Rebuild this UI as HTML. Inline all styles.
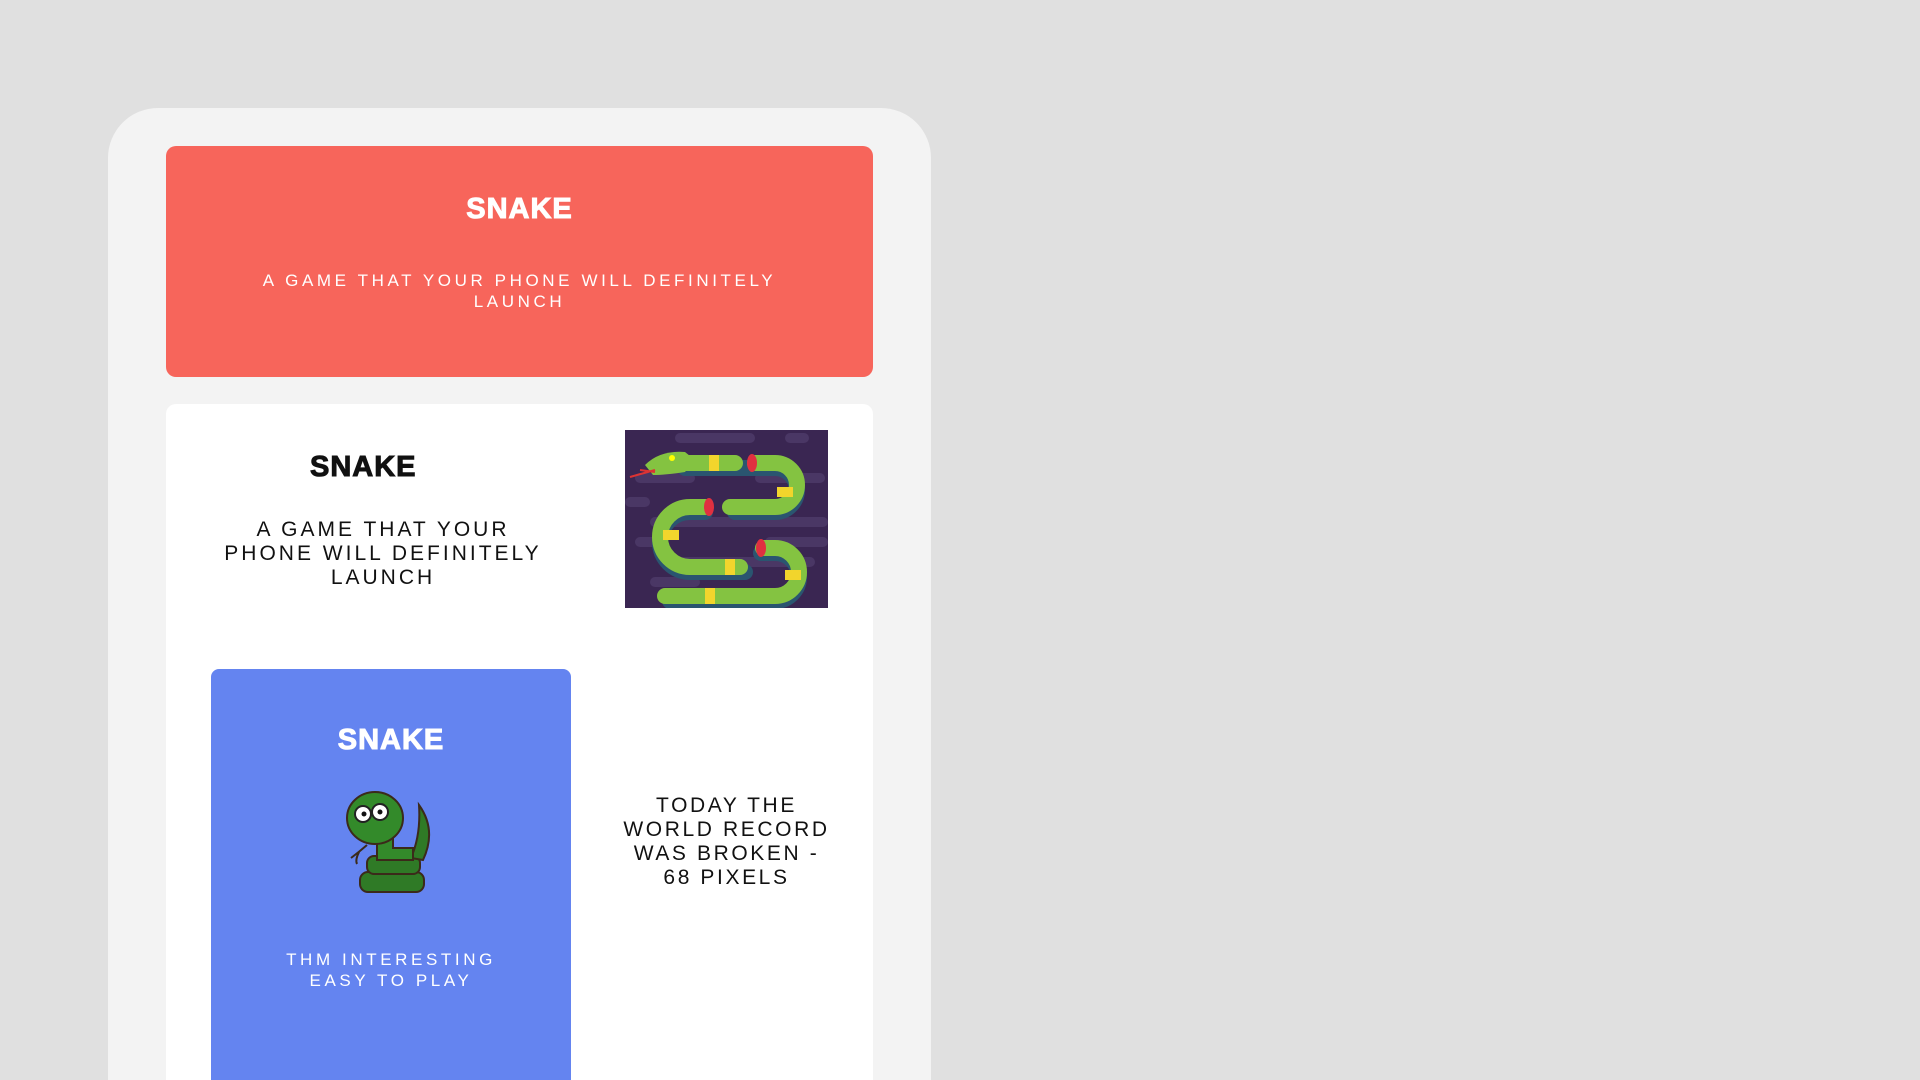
<!DOCTYPE html>
<html><head><meta charset="utf-8"><style>
*{margin:0;padding:0;box-sizing:border-box}
html,body{width:1920px;height:1080px;overflow:hidden}
body{background:#e0e0e0;font-family:"Liberation Sans",sans-serif;position:relative}
.panel{position:absolute;left:108px;top:108px;width:823px;height:972px;background:#f3f3f3;border-radius:50px 50px 0 0}
.red{position:absolute;left:166px;top:146px;width:707px;height:231px;background:#f7655b;border-radius:10px;color:#fff;text-align:center}
.white{position:absolute;left:166px;top:404px;width:707px;height:676px;background:#fff;border-radius:10px 10px 0 0}
.blue{position:absolute;left:211px;top:669px;width:360px;height:411px;background:#6484f0;border-radius:8px 8px 0 0;color:#fff;text-align:center}
.t{font-weight:900;font-size:29px;letter-spacing:1px;position:absolute;left:0;right:0;text-align:center;-webkit-text-stroke:1px currentColor}
.s{position:absolute;left:0;right:0;text-align:center;letter-spacing:3.6px;font-size:17px;line-height:21px}
.d{position:absolute;text-align:center;letter-spacing:3px;font-size:21px;line-height:24px;color:#111}
</style></head><body>
<div class="panel"></div>
<div class="red">
 <div class="t" style="top:47px">SNAKE</div>
 <div class="s" style="top:124px">A GAME THAT YOUR PHONE WILL DEFINITELY<br>LAUNCH</div>
</div>
<div class="white">
 <div class="t" style="left:144px;right:auto;width:92px;top:47px;color:#111">SNAKE</div>
 <div class="d" style="left:47px;width:340px;top:114px">A GAME THAT YOUR<br>PHONE WILL DEFINITELY<br>LAUNCH</div>
 <svg style="position:absolute;left:459px;top:26px" width="203" height="178" viewBox="0 0 203 178">
  <rect width="203" height="178" fill="#3a2652"/>
  <g fill="#4a3765">
   <rect x="50" y="3" width="80" height="10" rx="5"/><rect x="160" y="3" width="24" height="10" rx="5"/>
   <rect x="10" y="43" width="60" height="10" rx="5"/><rect x="130" y="43" width="70" height="10" rx="5"/>
   <rect x="0" y="67" width="25" height="10" rx="5"/><rect x="25" y="87" width="178" height="10" rx="5"/>
   <rect x="10" y="107" width="25" height="10" rx="5"/><rect x="140" y="107" width="63" height="10" rx="5"/>
   <rect x="50" y="127" width="140" height="10" rx="5"/><rect x="25" y="147" width="50" height="10" rx="5"/>
   <rect x="50" y="166" width="100" height="10" rx="5"/>
  </g>
  <g fill="none" stroke-linecap="round">
   <path d="M60 33 H125 M120 33 H150 A22 22 0 0 1 150 77 H110 M80 77 H65 A30 30 0 0 0 65 137 H120 M136 118 H150 A24 24 0 0 1 150 166 H45" stroke="#2a5570" stroke-width="16" transform="translate(0,5)"/>
   <path d="M60 33 H110 M130 33 H150 A22 22 0 0 1 150 77 H105 M80 77 H65 A30 30 0 0 0 65 137 H115 M138 118 H150 A24 24 0 0 1 150 166 H40" stroke="#84c341" stroke-width="16"/>
  </g>
  <path d="M20 35 Q35 20 60 22 L70 30 L60 42 Q40 45 28 45 Z" fill="#84c341"/>
  <path d="M5 47 L30 40 M15 40 L30 42" stroke="#d33" stroke-width="2"/>
  <circle cx="47" cy="28" r="3" fill="#ff0"/>
  <g fill="#f2d52c"><rect x="84" y="25" width="10" height="16"/><rect x="152" y="57" width="16" height="10"/><rect x="38" y="100" width="16" height="10"/><rect x="100" y="129" width="10" height="16"/><rect x="160" y="140" width="16" height="10"/><rect x="80" y="158" width="10" height="16"/></g>
  <g fill="#e03040"><ellipse cx="127" cy="33" rx="5" ry="9"/><ellipse cx="84" cy="77" rx="5" ry="9"/><ellipse cx="136" cy="118" rx="5" ry="9"/></g>
 </svg>
 <div class="d" style="left:439px;width:243px;top:390px;letter-spacing:2.6px">TODAY THE<br>WORLD RECORD<br>WAS BROKEN -<br>68 PIXELS</div>
</div>
<div class="blue">
 <div class="t" style="top:55px">SNAKE</div>
 <svg style="position:absolute;left:134px;top:121px" width="92" height="105" viewBox="0 0 92 105">
  <g stroke="#3b2a1a" stroke-width="2">
   <rect x="15" y="82" width="64" height="20" rx="8" fill="#2f7a26"/>
   <rect x="22" y="66" width="53" height="18" rx="7" fill="#2f7a26"/>
   <path d="M74 15 Q92 40 78 70 L66 68 Q76 45 74 15Z" fill="#2f7a26"/>
   <path d="M32 45 L32 70 H68 V58 H48 V45Z" fill="#338a2a"/>
   <ellipse cx="30" cy="28" rx="28" ry="26" fill="#338a2a"/>
   <path d="M22 55 Q14 62 6 68 M14 62 Q10 70 12 74" fill="none"/>
  </g>
  <circle cx="18" cy="24" r="8" fill="#fff" stroke="#222" stroke-width="2"/><circle cx="35" cy="22" r="8" fill="#fff" stroke="#222" stroke-width="2"/>
  <circle cx="19" cy="24" r="2.5" fill="#111"/><circle cx="35" cy="22" r="2.5" fill="#111"/>
 </svg>
 <div class="s" style="top:280px">THM INTERESTING<br>EASY TO PLAY</div>
</div>
</body></html>
